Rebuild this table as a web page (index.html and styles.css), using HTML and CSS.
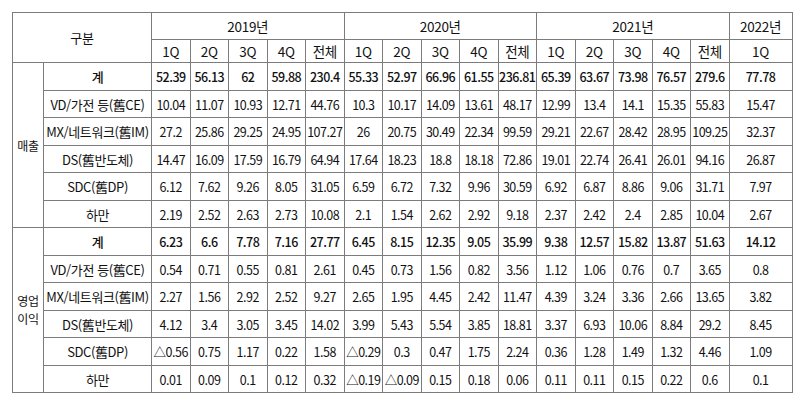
FILE: index.html
```html
<!DOCTYPE html>
<html lang="ko">
<head>
<meta charset="utf-8">
<link rel="stylesheet" href="styles.css">
</head>
<body>
<table class="fin">
  <colgroup>
    <col class="c-grp"><col class="c-lbl">
    <col class="c-q"><col class="c-q"><col class="c-q"><col class="c-q"><col class="c-q">
    <col class="c-q"><col class="c-q"><col class="c-q"><col class="c-q"><col class="c-q">
    <col class="c-q"><col class="c-q"><col class="c-q"><col class="c-q"><col class="c-q">
    <col class="c-last">
  </colgroup>
  <thead>
    <tr class="h1">
      <th colspan="2" rowspan="2" class="gubun">구분</th>
      <th colspan="5">2019년</th>
      <th colspan="5">2020년</th>
      <th colspan="5">2021년</th>
      <th>2022년</th>
    </tr>
    <tr class="h2">
      <th>1Q</th><th>2Q</th><th>3Q</th><th>4Q</th><th>전체</th>
      <th>1Q</th><th>2Q</th><th>3Q</th><th>4Q</th><th>전체</th>
      <th>1Q</th><th>2Q</th><th>3Q</th><th>4Q</th><th>전체</th>
      <th>1Q</th>
    </tr>
  </thead>
  <tbody>
    <tr class="r-a total">
      <th rowspan="6" class="grp">매출</th>
      <th class="lbl">계</th>
      <td>52.39</td><td>56.13</td><td>62</td><td>59.88</td><td>230.4</td>
      <td>55.33</td><td>52.97</td><td>66.96</td><td>61.55</td><td>236.81</td>
      <td>65.39</td><td>63.67</td><td>73.98</td><td>76.57</td><td>279.6</td>
      <td>77.78</td>
    </tr>
    <tr class="r-b">
      <th class="lbl">VD/가전 등(舊CE)</th>
      <td>10.04</td><td>11.07</td><td>10.93</td><td>12.71</td><td>44.76</td>
      <td>10.3</td><td>10.17</td><td>14.09</td><td>13.61</td><td>48.17</td>
      <td>12.99</td><td>13.4</td><td>14.1</td><td>15.35</td><td>55.83</td>
      <td>15.47</td>
    </tr>
    <tr class="r-a">
      <th class="lbl">MX/네트워크(舊IM)</th>
      <td>27.2</td><td>25.86</td><td>29.25</td><td>24.95</td><td>107.27</td>
      <td>26</td><td>20.75</td><td>30.49</td><td>22.34</td><td>99.59</td>
      <td>29.21</td><td>22.67</td><td>28.42</td><td>28.95</td><td>109.25</td>
      <td>32.37</td>
    </tr>
    <tr class="r-b">
      <th class="lbl">DS(舊반도체)</th>
      <td>14.47</td><td>16.09</td><td>17.59</td><td>16.79</td><td>64.94</td>
      <td>17.64</td><td>18.23</td><td>18.8</td><td>18.18</td><td>72.86</td>
      <td>19.01</td><td>22.74</td><td>26.41</td><td>26.01</td><td>94.16</td>
      <td>26.87</td>
    </tr>
    <tr class="r-a">
      <th class="lbl">SDC(舊DP)</th>
      <td>6.12</td><td>7.62</td><td>9.26</td><td>8.05</td><td>31.05</td>
      <td>6.59</td><td>6.72</td><td>7.32</td><td>9.96</td><td>30.59</td>
      <td>6.92</td><td>6.87</td><td>8.86</td><td>9.06</td><td>31.71</td>
      <td>7.97</td>
    </tr>
    <tr class="r-b">
      <th class="lbl">하만</th>
      <td>2.19</td><td>2.52</td><td>2.63</td><td>2.73</td><td>10.08</td>
      <td>2.1</td><td>1.54</td><td>2.62</td><td>2.92</td><td>9.18</td>
      <td>2.37</td><td>2.42</td><td>2.4</td><td>2.85</td><td>10.04</td>
      <td>2.67</td>
    </tr>
    <tr class="r-a total">
      <th rowspan="6" class="grp"><span class="grp-line">영업</span><span class="grp-line">이익</span></th>
      <th class="lbl">계</th>
      <td>6.23</td><td>6.6</td><td>7.78</td><td>7.16</td><td>27.77</td>
      <td>6.45</td><td>8.15</td><td>12.35</td><td>9.05</td><td>35.99</td>
      <td>9.38</td><td>12.57</td><td>15.82</td><td>13.87</td><td>51.63</td>
      <td>14.12</td>
    </tr>
    <tr class="r-b">
      <th class="lbl">VD/가전 등(舊CE)</th>
      <td>0.54</td><td>0.71</td><td>0.55</td><td>0.81</td><td>2.61</td>
      <td>0.45</td><td>0.73</td><td>1.56</td><td>0.82</td><td>3.56</td>
      <td>1.12</td><td>1.06</td><td>0.76</td><td>0.7</td><td>3.65</td>
      <td>0.8</td>
    </tr>
    <tr class="r-a">
      <th class="lbl">MX/네트워크(舊IM)</th>
      <td>2.27</td><td>1.56</td><td>2.92</td><td>2.52</td><td>9.27</td>
      <td>2.65</td><td>1.95</td><td>4.45</td><td>2.42</td><td>11.47</td>
      <td>4.39</td><td>3.24</td><td>3.36</td><td>2.66</td><td>13.65</td>
      <td>3.82</td>
    </tr>
    <tr class="r-b">
      <th class="lbl">DS(舊반도체)</th>
      <td>4.12</td><td>3.4</td><td>3.05</td><td>3.45</td><td>14.02</td>
      <td>3.99</td><td>5.43</td><td>5.54</td><td>3.85</td><td>18.81</td>
      <td>3.37</td><td>6.93</td><td>10.06</td><td>8.84</td><td>29.2</td>
      <td>8.45</td>
    </tr>
    <tr class="r-a">
      <th class="lbl">SDC(舊DP)</th>
      <td>△0.56</td><td>0.75</td><td>1.17</td><td>0.22</td><td>1.58</td>
      <td>△0.29</td><td>0.3</td><td>0.47</td><td>1.75</td><td>2.24</td>
      <td>0.36</td><td>1.28</td><td>1.49</td><td>1.32</td><td>4.46</td>
      <td>1.09</td>
    </tr>
    <tr class="r-b">
      <th class="lbl">하만</th>
      <td>0.01</td><td>0.09</td><td>0.1</td><td>0.12</td><td>0.32</td>
      <td>△0.19</td><td>△0.09</td><td>0.15</td><td>0.18</td><td>0.06</td>
      <td>0.11</td><td>0.11</td><td>0.15</td><td>0.22</td><td>0.6</td>
      <td>0.1</td>
    </tr>
  </tbody>
</table>
</body>
</html>
```
FILE: styles.css
```css
html, body {
  margin: 0;
  padding: 0;
  background: #ffffff;
}
body {
  padding: 12px 0 0 12px;
  font-family: "Noto Sans CJK KR", "Noto Sans", sans-serif;
  color: #111;
}
.fin {
  border-collapse: collapse;
  table-layout: fixed;
  width: 778px;
  font-size: 12.5px;
  letter-spacing: -0.5px;
}
.c-grp { width: 31px; }
.c-lbl { width: 108px; }
.c-q { width: 38.5px; }
.c-last { width: 63px; }
.fin th, .fin td {
  border: 1px solid #7c7c7c;
  padding: 0;
  text-align: center;
  vertical-align: middle;
  white-space: nowrap;
  overflow: hidden;
  line-height: 15px;
}
.fin th {
  font-weight: 400;
}
.fin thead th {
  font-size: 13.5px;
  letter-spacing: -0.3px;
}
.fin thead .gubun {
  font-size: 13px;
}
.h1 { height: 27px; }
.h2 { height: 23px; }
.r-a { height: 28px; }
.r-b { height: 27px; }
.fin .lbl {
  font-size: 13px;
  letter-spacing: -0.4px;
}
.fin .grp {
  font-size: 12px;
  letter-spacing: -0.3px;
}
.grp-line {
  display: block;
  line-height: 18px;
}
.total td, .total .lbl {
  font-weight: 500;
}
```
